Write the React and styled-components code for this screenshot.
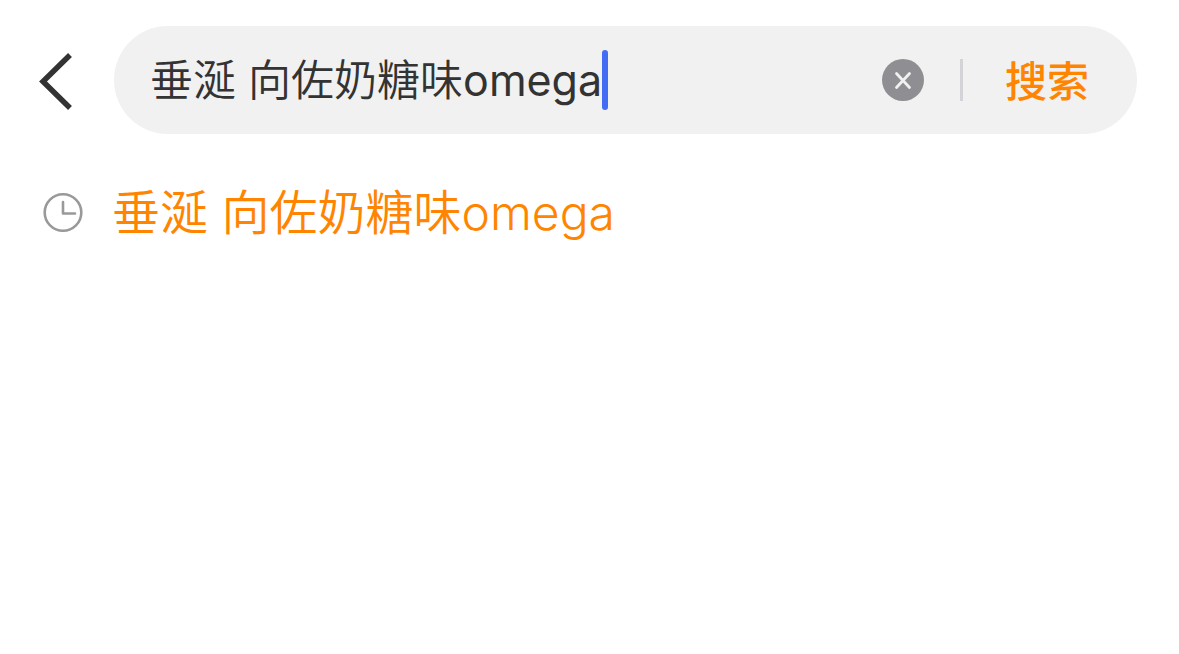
import React, { useState } from "react";
import styled, { createGlobalStyle } from "styled-components";

const GlobalStyle = createGlobalStyle`
  * {
    box-sizing: border-box;
  }

  body {
    margin: 0;
    background: #ffffff;
    font-family: Inter, "Noto Sans CJK SC DemiLight", "Noto Sans CJK SC", sans-serif;
  }

  button,
  input {
    font-family: inherit;
    border: none;
    padding: 0;
    background: none;
  }
`;

const Page = styled.main`
  padding: 26px 42px 0 38px;
`;

const SearchForm = styled.form`
  display: flex;
  align-items: center;
  gap: 40px;
`;

const IconButton = styled.button`
  display: flex;
  flex-shrink: 0;
  cursor: pointer;
`;

const SearchBar = styled.div`
  display: flex;
  flex: 1;
  align-items: center;
  min-width: 0;
  height: 108px;
  padding: 0 48px 0 36px;
  border-radius: 54px;
  background: #f1f1f1;
`;

const Field = styled.div`
  display: flex;
  flex: 1;
  align-items: center;
  min-width: 0;
`;

const SearchInput = styled.input`
  field-sizing: content;
  min-width: 0;
  height: 60px;
  font-size: 43px;
  line-height: 60px;
  color: #333333;
  caret-color: transparent;
  outline: none;
`;

const Caret = styled.span`
  flex-shrink: 0;
  width: 6px;
  height: 60px;
  border-radius: 3px;
  background: #436cf5;
`;

const Divider = styled.span`
  flex-shrink: 0;
  width: 3px;
  height: 42px;
  margin: 0 42px 0 36px;
  background: #d4d4d8;
`;

const SearchButton = styled.button`
  flex-shrink: 0;
  padding-top: 4px;
  font-family: Inter, "Noto Sans CJK SC", sans-serif;
  font-size: 42px;
  font-weight: 500;
  line-height: 60px;
  color: #ff8500;
  cursor: pointer;
`;

const HistoryList = styled.ul`
  margin: 44px 0 0;
  padding: 0 4px;
  list-style: none;
`;

const HistoryLink = styled.a`
  display: flex;
  align-items: center;
  gap: 28px;
  font-size: 48px;
  font-weight: 300;
  line-height: 70px;
  color: #ff8500;
  text-decoration: none;
`;

const BackIcon = () => (
  <svg width="36" height="60" viewBox="0 0 36 60" fill="none">
    <path d="M32 5 L5 31.5 L32 58" stroke="#333333" strokeWidth="5.5" />
  </svg>
);

const ClearIcon = () => (
  <svg width="42" height="42" viewBox="0 0 42 42" fill="none">
    <circle cx="21" cy="21" r="21" fill="#8e8e93" />
    <path
      d="M14.5 14.5 L27.5 28.5 M27.5 14.5 L14.5 28.5"
      stroke="#f1f1f1"
      strokeWidth="2.8"
      strokeLinecap="round"
    />
  </svg>
);

const ClockIcon = () => (
  <svg width="42" height="42" viewBox="0 0 42 42" fill="none">
    <circle cx="21" cy="20.5" r="18.3" stroke="#999999" strokeWidth="2.6" />
    <path
      d="M21 10 V21.5 H33"
      stroke="#999999"
      strokeWidth="2.6"
      strokeLinecap="round"
      strokeLinejoin="round"
    />
  </svg>
);

const history = ["垂涎 向佐奶糖味omega"];

const App = () => {
  const [query, setQuery] = useState("垂涎 向佐奶糖味omega");

  const handleSubmit = (event) => {
    event.preventDefault();
  };

  return (
    <Page>
      <GlobalStyle />
      <SearchForm role="search" onSubmit={handleSubmit}>
        <IconButton type="button" aria-label="返回">
          <BackIcon />
        </IconButton>
        <SearchBar>
          <Field>
            <SearchInput
              type="text"
              aria-label="搜索"
              spellCheck={false}
              value={query}
              onChange={(e) => setQuery(e.target.value)}
            />
            <Caret />
          </Field>
          <IconButton type="button" aria-label="清除" onClick={() => setQuery("")}>
            <ClearIcon />
          </IconButton>
          <Divider />
          <SearchButton type="submit">搜索</SearchButton>
        </SearchBar>
      </SearchForm>
      <HistoryList>
        {history.map((item) => (
          <li key={item}>
            <HistoryLink href="#" onClick={() => setQuery(item)}>
              <ClockIcon />
              {item}
            </HistoryLink>
          </li>
        ))}
      </HistoryList>
    </Page>
  );
};

export default App;
